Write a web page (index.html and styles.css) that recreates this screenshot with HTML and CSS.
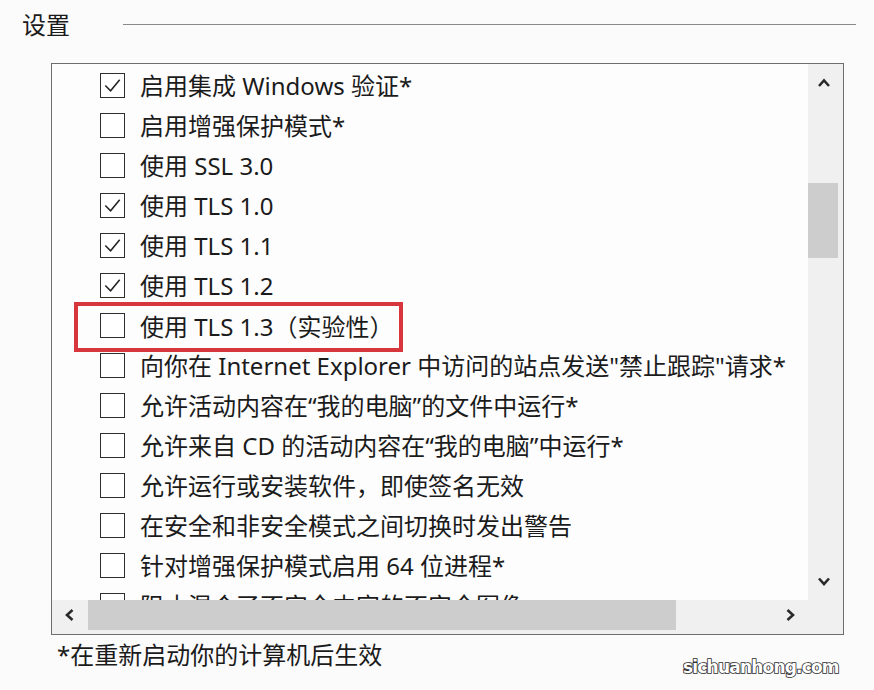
FILE: index.html
```html
<!DOCTYPE html>
<html lang="zh-CN">
<head>
<meta charset="utf-8">
<title>设置</title>
<link rel="stylesheet" href="styles.css">
</head>
<body>
<div class="page">
  <div class="header">
    <span class="title">设置</span>
    <span class="rule"></span>
  </div>
  <div class="box">
    <div class="content">
      <div class="list">
        <div class="row"><span class="cb"><svg viewBox="0 0 24 24"><polyline points="4.5,12 10,17.5 19.5,6"/></svg></span><span class="label">启用集成 Windows 验证*</span></div>
        <div class="row"><span class="cb"></span><span class="label">启用增强保护模式*</span></div>
        <div class="row"><span class="cb"></span><span class="label">使用 SSL 3.0</span></div>
        <div class="row"><span class="cb"><svg viewBox="0 0 24 24"><polyline points="4.5,12 10,17.5 19.5,6"/></svg></span><span class="label">使用 TLS 1.0</span></div>
        <div class="row"><span class="cb"><svg viewBox="0 0 24 24"><polyline points="4.5,12 10,17.5 19.5,6"/></svg></span><span class="label">使用 TLS 1.1</span></div>
        <div class="row"><span class="cb"><svg viewBox="0 0 24 24"><polyline points="4.5,12 10,17.5 19.5,6"/></svg></span><span class="label">使用 TLS 1.2</span></div>
        <div class="row"><span class="cb"></span><span class="label">使用 TLS 1.3<span class="cjk">（实验性）</span></span></div>
        <div class="row"><span class="cb"></span><span class="label">向你在 Internet Explorer 中访问的站点发送"禁止跟踪"请求*</span></div>
        <div class="row"><span class="cb"></span><span class="label">允许活动内容在“我的电脑”的文件中运行*</span></div>
        <div class="row"><span class="cb"></span><span class="label">允许来自 CD 的活动内容在“我的电脑”中运行*</span></div>
        <div class="row"><span class="cb"></span><span class="label">允许运行或安装软件，即使签名无效</span></div>
        <div class="row"><span class="cb"></span><span class="label">在安全和非安全模式之间切换时发出警告</span></div>
        <div class="row"><span class="cb"></span><span class="label">针对增强保护模式启用 64 位进程*</span></div>
        <div class="row"><span class="cb"></span><span class="label">阻止混合了不安全内容的不安全图像</span></div>
      </div>
      <div class="highlight"></div>
    </div>
    <div class="vscroll">
      <span class="arrow"><svg viewBox="0 0 16 16"><polyline points="3,11 8,5.5 13,11"/></svg></span>
      <span class="vthumb"></span>
      <span class="vspace"></span>
      <span class="arrow"><svg viewBox="0 0 16 16"><polyline points="3,5.5 8,11 13,5.5"/></svg></span>
    </div>
    <div class="hscroll">
      <span class="harrow"><svg viewBox="0 0 16 16"><polyline points="10.5,3 5,8 10.5,13"/></svg></span>
      <span class="hthumb"></span>
      <span class="hspace"></span>
      <span class="harrow"><svg viewBox="0 0 16 16"><polyline points="5.5,3 11,8 5.5,13"/></svg></span>
    </div>
    <div class="corner"></div>
  </div>
  <div class="note">*在重新启动你的计算机后生效</div>
  <div class="watermark">sichuanhong.com</div>
</div>
</body>
</html>
```

FILE: styles.css
```css
* { box-sizing: border-box; }
html, body { margin: 0; padding: 0; }
body {
  background: #fbfbfc;
  color: #1b1b1b;
  font-family: "Noto Sans", "Noto Sans CJK SC", sans-serif;
  width: 874px;
  height: 690px;
  overflow: hidden;
}
.page {
  position: relative;
  width: 874px;
  height: 690px;
}
.header {
  display: flex;
  align-items: center;
  height: 47px;
  padding-left: 22px;
  padding-right: 18px;
}
.title {
  font-size: 24px;
  line-height: 1;
  padding-top: 2px;
}
.rule {
  flex: 1;
  height: 1px;
  background: #8a8a8a;
  margin-left: 53px;
  margin-top: 1px;
}
.box {
  margin-top: 16px;
  margin-left: 51px;
  width: 793px;
  height: 572px;
  border: 1px solid #6e6e6e;
  background: #fdfdfe;
  display: grid;
  grid-template-columns: 1fr 35px;
  grid-template-rows: 1fr 34px;
}
.content {
  position: relative;
  overflow: hidden;
}
.list {
  display: flex;
  flex-direction: column;
  padding-top: 1px;
}
.row {
  display: flex;
  align-items: center;
  height: 40px;
  padding-left: 48px;
  gap: 15px;
  white-space: nowrap;
}
.cb {
  width: 25px;
  height: 25px;
  border: 1.6px solid #2e2e2e;
  background: #ffffff;
  flex: none;
  display: flex;
}
.cb svg {
  width: 100%;
  height: 100%;
  fill: none;
  stroke: #222;
  stroke-width: 1.6;
}
.label {
  font-size: 24px;
  line-height: 1;
  padding-top: 2px;
}
.cjk {
  font-family: "Noto Sans CJK SC", sans-serif;
}
.highlight {
  position: absolute;
  left: 22px;
  top: 238px;
  width: 329px;
  height: 50px;
  border: 4px solid #d6363c;
}
.vscroll {
  background: #f0f0f0;
  display: flex;
  flex-direction: column;
}
.arrow {
  height: 38px;
  display: flex;
  align-items: center;
  justify-content: center;
  padding-right: 4px;
}
.arrow svg, .harrow svg {
  width: 16px;
  height: 16px;
  fill: none;
  stroke: #2a2a2a;
  stroke-width: 2.6;
}
.vthumb {
  margin-top: 81px;
  height: 75px;
  width: 30px;
  background: #cdcdcd;
}
.vspace { flex: 1; }
.hscroll {
  background: #f0f0f0;
  display: flex;
  align-items: stretch;
  padding-bottom: 4px;
}
.harrow {
  width: 36px;
  display: flex;
  align-items: center;
  justify-content: center;
}
.hthumb {
  width: 588px;
  background: #cdcdcd;
}
.hspace { flex: 1; }
.corner { background: #f0f0f0; }
.note {
  margin-top: 7px;
  margin-left: 57px;
  font-size: 24px;
  line-height: 1.1;
}
.watermark {
  position: absolute;
  left: 683px;
  top: 657px;
  font-family: "DejaVu Sans", sans-serif;
  font-weight: bold;
  font-size: 17px;
  letter-spacing: -0.8px;
  color: #ffffff;
  -webkit-text-stroke: 1.6px #2a2a2a;
  paint-order: stroke fill;
}
```
